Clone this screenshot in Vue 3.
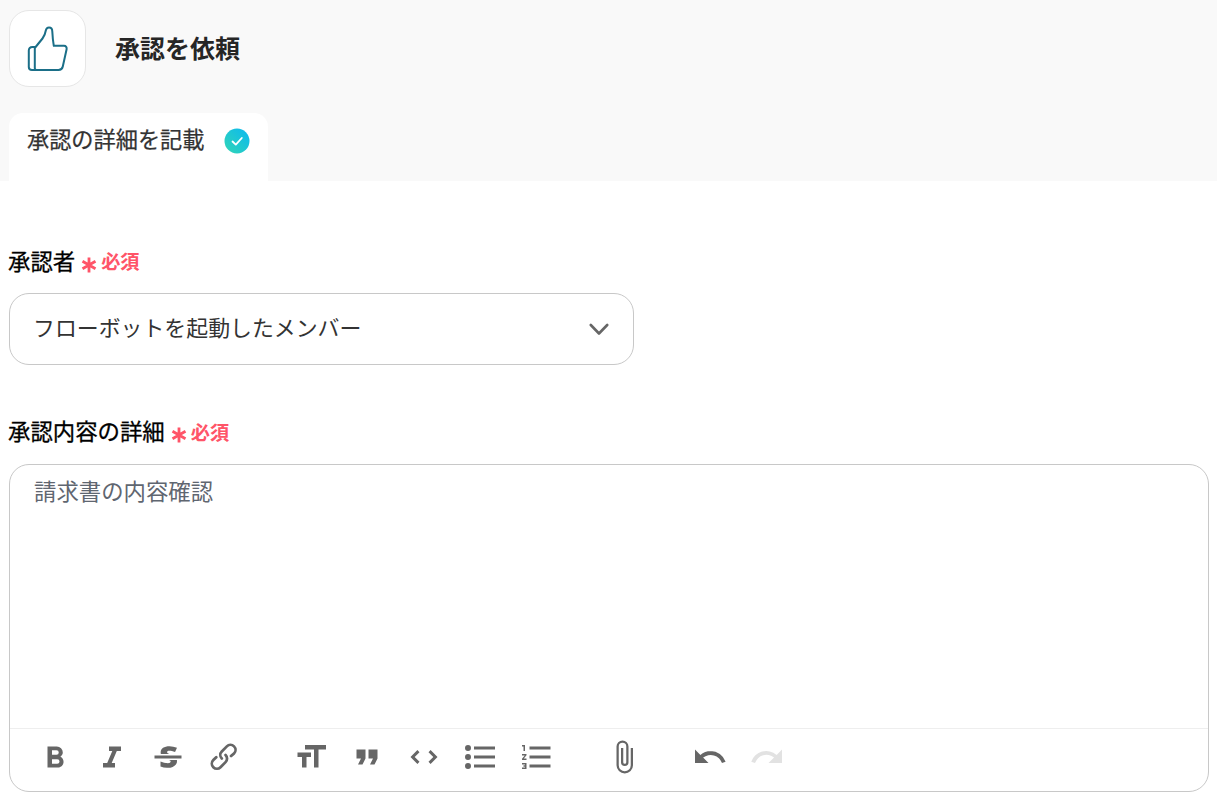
<script setup>
const groups = [
  [
    { d: 'M15.6 11.8c1-.7 1.6-1.8 1.6-2.8a4 4 0 0 0-4-4H7v14h7c2.1 0 3.7-1.7 3.7-3.8 0-1.5-.8-2.8-2.1-3.4zM10 7.5h3a1.5 1.5 0 1 1 0 3h-3v-3zm3.5 9H10v-3h3.5a1.5 1.5 0 1 1 0 3z' },
    { d: 'M10 5v3h2.2l-3.4 8H6v3h8v-3h-2.2l3.4-8H18V5h-8z' },
    { d: 'M12.73 14l.28.14c.26.15.45.3.57.44.12.14.18.3.18.5 0 .3-.15.56-.44.75-.3.2-.76.3-1.39.3A13.52 13.52 0 0 1 7 14.95v3.37a10.64 10.64 0 0 0 4.84.88c1.26 0 2.35-.19 3.28-.56.93-.37 1.64-.9 2.14-1.57s.74-1.45.74-2.32c0-.26-.02-.51-.06-.75h-5.21zm-5.5-4c-.08-.34-.12-.7-.12-1.1 0-1.29.52-2.3 1.58-3.02 1.05-.72 2.5-1.08 4.34-1.08 1.62 0 3.28.34 4.97 1l-1.3 2.93c-1.47-.6-2.73-.9-3.8-.9-.55 0-.96.08-1.2.26-.26.17-.38.38-.38.64 0 .27.16.52.48.74.17.12.53.3 1.05.53H7.23zM3 13h18v-2H3v2z' },
    { d: 'M9.88 13.7a4.3 4.3 0 0 1 0-6.07l3.37-3.37a4.26 4.26 0 0 1 6.07 0 4.3 4.3 0 0 1 0 6.06l-1.96 1.72a.91.91 0 1 1-1.3-1.3l1.97-1.71a2.46 2.46 0 0 0-3.48-3.48l-3.38 3.37a2.46 2.46 0 0 0 0 3.48.91.91 0 1 1-1.3 1.3z M4.25 19.46a4.3 4.3 0 0 1 0-6.07l1.93-1.9a.91.91 0 1 1 1.3 1.3l-1.93 1.9a2.46 2.46 0 0 0 3.48 3.48l3.37-3.38c.96-.96.96-2.52 0-3.48a.91.91 0 1 1 1.3-1.3 4.3 4.3 0 0 1 0 6.07l-3.38 3.38a4.26 4.26 0 0 1-6.07 0z' },
  ],
  [
    { d: 'M12 9v3H9v7H6v-7H3V9h9zM8 4h14v3h-5v12h-3V7H8V4z' },
    { d: 'M6 17h3l2-4V7H5v6h3zm8 0h3l2-4V7h-6v6h3z' },
    { d: 'M18.2 12L15 15.2l1.4 1.4L21 12l-4.6-4.6L15 8.8l3.2 3.2zM5.8 12L9 8.8 7.6 7.4 3 12l4.6 4.6L9 15.2 5.8 12z' },
    { d: 'M4 4a2 2 0 1 0 0 4 2 2 0 0 0 0-4zm0 6a2 2 0 1 0 0 4 2 2 0 0 0 0-4zm0 6a2 2 0 1 0 0 4 2 2 0 0 0 0-4zm4 3h14v-2H8v2zm0-6h14v-2H8v2zm0-8v2h14V5H8z' },
    { d: 'M2 17h2v.5H3v1h1v.5H2v1h3v-4H2v1zm1-9h1V4H2v1h1v3zm-1 3h1.8L2 13.1v.9h3v-1H3.2L5 10.9V10H2v1zm5-6v2h14V5H7zm0 14h14v-2H7v2zm0-6h14v-2H7v2z' },
  ],
  [
    { d: 'M16.5 6v11.5a4 4 0 1 1-8 0V5a2.5 2.5 0 0 1 5 0v10.5a1 1 0 1 1-2 0V6H10v9.5a2.5 2.5 0 0 0 5 0V5a4 4 0 1 0-8 0v12.5a5.5 5.5 0 0 0 11 0V6h-1.5z' },
  ],
  [
    { d: 'M12.5 8c-2.6 0-5 1-6.9 2.6L2 7v9h9l-3.6-3.6A8 8 0 0 1 20 16l2.4-.8a10.5 10.5 0 0 0-10-7.2z' },
    { d: 'M18.4 10.6a10.5 10.5 0 0 0-16.9 4.6L4 16a8 8 0 0 1 12.7-3.6L13 16h9V7l-3.6 3.6z', disabled: true },
  ],
]
</script>

<template>
  <div class="page">
    <header class="top">
      <div class="head-row">
        <div class="logo">
          <svg width="44" height="50" viewBox="0 0 44 50" fill="none" stroke="#1b6f88" stroke-width="2" stroke-linejoin="round" stroke-linecap="round">
            <path d="M8.800 24 L16.500 14.500 C18.500 12 19.300 9.500 19.800 6.500 C20.200 4.500 21.500 3.500 23 3.500 C25 3.500 26.300 5 26.300 7.500 C26.500 12 27 17 27.800 21.800 L38 21.800 C40 21.800 41 23.300 40.600 25.200 L36.800 42.500 C36.200 45 35 46 32.500 46 L10.500 46 C9.500 46 8.800 45.200 8.800 44 Z" />
            <path d="M8.800 23 L6.500 23 C4 23 2.800 24.500 2.800 26.500 L2.800 43 C2.800 45 4 46 6 46 L10.500 46" />
          </svg>
        </div>
        <h1 class="title">承認を依頼</h1>
      </div>
      <div class="tab">
        <span class="tab-text">承認の詳細を記載</span>
        <svg class="check" width="26" height="26" viewBox="0 0 26 26">
          <defs>
            <linearGradient id="checkGrad" x1="0" y1="1" x2="1" y2="0">
              <stop offset="0" stop-color="#32d6b4" />
              <stop offset="1" stop-color="#0bb8f2" />
            </linearGradient>
          </defs>
          <circle cx="13" cy="13" r="12.500" fill="url(#checkGrad)" />
          <path d="M8.500 13.500 L11.800 16.600 L17.800 10" fill="none" stroke="#fff" stroke-width="1.800" stroke-linecap="round" stroke-linejoin="round" />
        </svg>
      </div>
    </header>

    <main class="form">
      <section class="field first">
        <div class="label-row">
          <span class="label">承認者</span>
          <svg class="star" width="16" height="16" viewBox="0 0 16 16" stroke="#ff5468" stroke-width="2.800">
            <path d="M8 0.500 V15.500 M1.500 4.200 L14.500 11.800 M14.500 4.200 L1.500 11.800" />
          </svg>
          <span class="req">必須</span>
        </div>
        <div class="select">
          <span class="select-text">フローボットを起動したメンバー</span>
          <svg width="20" height="13" viewBox="0 0 20 13" fill="none" stroke="#666" stroke-width="2.600" stroke-linecap="round" stroke-linejoin="round">
            <path d="M1.800 2 L10 10.500 L18.200 2" />
          </svg>
        </div>
      </section>

      <section class="field second">
        <div class="label-row">
          <span class="label">承認内容の詳細</span>
          <svg class="star" width="16" height="16" viewBox="0 0 16 16" stroke="#ff5468" stroke-width="2.800">
            <path d="M8 0.500 V15.500 M1.500 4.200 L14.500 11.800 M14.500 4.200 L1.500 11.800" />
          </svg>
          <span class="req">必須</span>
        </div>
        <div class="editor">
          <div class="content">請求書の内容確認</div>
          <div class="toolbar">
            <div v-for="(group, gi) in groups" :key="gi" class="group">
              <span v-for="(icon, ii) in group" :key="ii" class="tool">
                <svg width="36" height="36" viewBox="0 0 24 24" :fill="icon.disabled ? '#e2e2e2' : '#666'">
                  <path :d="icon.d" />
                </svg>
              </span>
            </div>
          </div>
        </div>
      </section>
    </main>
  </div>
</template>

<style>
html, body {
  margin: 0;
  background: #fff;
}
</style>

<style scoped>
.page {
  width: 1217px;
  height: 800px;
  overflow: hidden;
  background: #fff;
  font-family: "Noto Sans CJK JP", "Noto Sans", sans-serif;
  color: #222;
}
.top {
  height: 181px;
  box-sizing: border-box;
  padding: 10px 0 0 9px;
  background: #f9f9f9;
}
.head-row {
  display: flex;
  align-items: center;
}
.logo {
  width: 77px;
  height: 77px;
  box-sizing: border-box;
  border: 1px solid #e6e6e6;
  border-radius: 20px;
  background: #fff;
  display: flex;
  align-items: center;
  justify-content: center;
}
.title {
  margin: 0 0 4px 29px;
  font-size: 25px;
  font-weight: 700;
  line-height: 32px;
  color: #262626;
}
.tab {
  margin-top: 26px;
  width: 259px;
  height: 68px;
  box-sizing: border-box;
  padding: 12px 0 0 18px;
  display: flex;
  align-items: flex-start;
  background: #fff;
  border-radius: 14px 14px 0 0;
}
.tab-text {
  font-size: 22.200px;
  font-weight: 400;
  line-height: 26px;
  color: #333;
  -webkit-text-stroke: 0.250px #333;
}
.check {
  margin-left: 19px;
  margin-top: 3px;
}
.form {
  padding: 0 8px 0 9px;
}
.first {
  padding-top: 63px;
}
.second {
  padding-top: 49px;
}
.label-row {
  display: flex;
  align-items: center;
  height: 34px;
}
.label {
  font-size: 22.400px;
  font-weight: 400;
  line-height: 30px;
  margin: 0 0 3px -1px;
  color: #000;
  -webkit-text-stroke: 0.300px #000;
}
.star {
  margin-left: 6px;
  margin-top: 7px;
}
.req {
  margin-left: 4px;
  font-size: 19.200px;
  font-weight: 700;
  color: #ff5468;
}
.second .label,
.second .req {
  position: relative;
  top: 0.500px;
}
.select {
  margin-top: 15px;
  width: 625px;
  height: 72px;
  box-sizing: border-box;
  border: 1px solid #c8c8c8;
  border-radius: 20px;
  padding: 0 24px 0 23px;
  display: flex;
  align-items: center;
  justify-content: space-between;
}
.select-text {
  font-size: 21.900px;
  color: #333;
  margin-bottom: 6px;
}
.editor {
  margin-top: 16px;
  height: 328px;
  box-sizing: border-box;
  border: 1px solid #c8c8c8;
  border-radius: 20px;
  display: flex;
  flex-direction: column;
}
.content {
  flex: 1;
  padding: 10px 24px;
  font-size: 22.400px;
  line-height: 30px;
  color: #5f6670;
}
.toolbar {
  height: 63px;
  box-sizing: border-box;
  border-top: 1px solid #eee;
  padding: 10px 0 0 17px;
  display: flex;
  align-items: flex-start;
  gap: 30.300px;
}
.group {
  display: flex;
}
.group:nth-child(3) {
  margin-left: 0.400px;
}
.tool {
  width: 56.400px;
  height: 36px;
  display: flex;
  justify-content: center;
}
</style>
